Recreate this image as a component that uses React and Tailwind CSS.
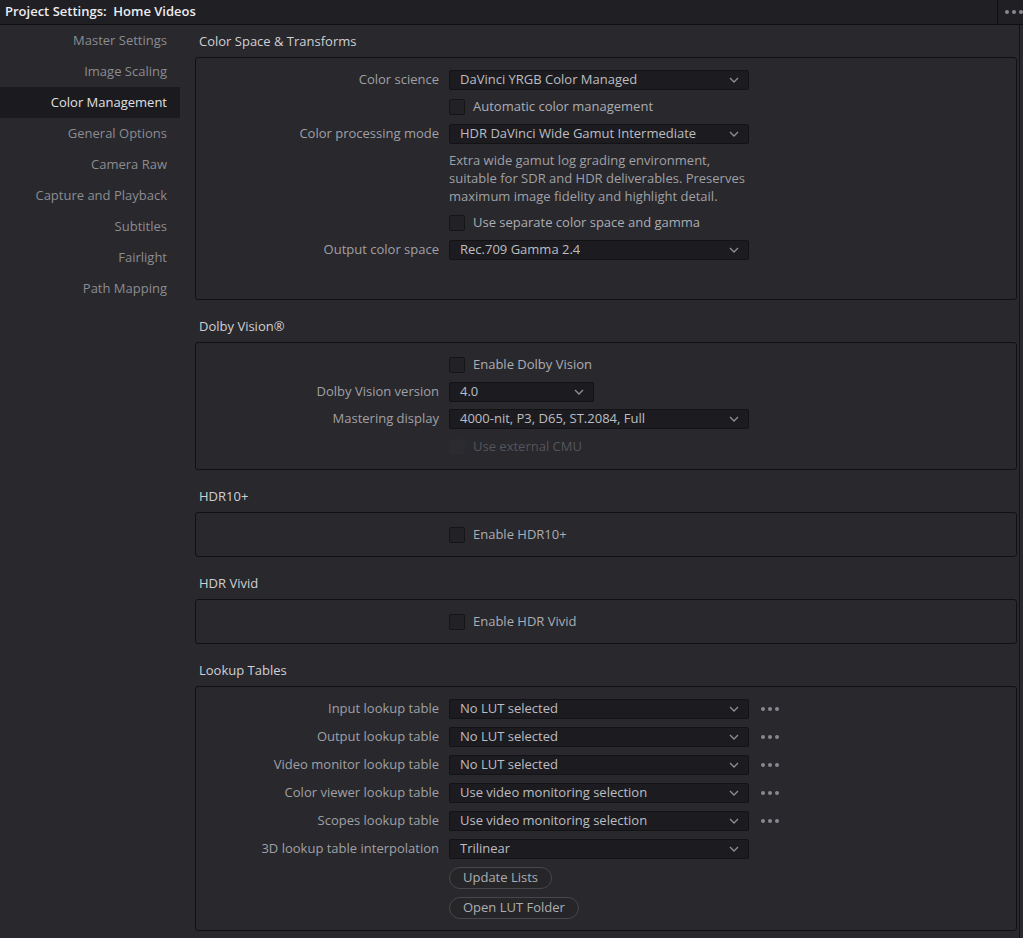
import React from 'react';

const navItems = [
  'Master Settings',
  'Image Scaling',
  'Color Management',
  'General Options',
  'Camera Raw',
  'Capture and Playback',
  'Subtitles',
  'Fairlight',
  'Path Mapping',
];

function Chevron() {
  return (
    <svg width="10" height="6" viewBox="0 0 10 6" className="shrink-0">
      <path d="M1 1 L5 5 L9 1" fill="none" stroke="#8e8e94" strokeWidth="1.3" />
    </svg>
  );
}

function Dots({ className = '' }) {
  return (
    <div className={'flex items-center gap-[3px] ' + className}>
      <span className="h-[4px] w-[4px] rounded-full bg-[#88888e]" />
      <span className="h-[4px] w-[4px] rounded-full bg-[#88888e]" />
      <span className="h-[4px] w-[4px] rounded-full bg-[#88888e]" />
    </div>
  );
}

function Select({ value, width = 'w-[300px]' }) {
  return (
    <div className={width + ' flex h-[20px] items-center justify-between rounded-[2px] border border-[#131316] bg-[#1c1c20] pl-[10px] pr-[9px] text-[#bcbcc1]'}>
      <span className="truncate">{value}</span>
      <Chevron />
    </div>
  );
}

function Checkbox({ label, disabled }) {
  return (
    <div className="flex items-center gap-[8px]">
      <span className={'h-[16px] w-[16px] rounded-[2px] border ' + (disabled ? 'border-[#2a2a2f] bg-[#2b2b30]' : 'border-[#151518] bg-[#222226]')} />
      <span className={disabled ? 'text-[#55555a]' : 'text-[#adadb2]'}>{label}</span>
    </div>
  );
}

function Row({ label, children, h = 'h-[27px]' }) {
  return (
    <div className={'flex items-center ' + h}>
      <div className="w-[253px] shrink-0 pr-[10px] text-right text-[#a0a0a5]">{label}</div>
      <div className="flex items-center">{children}</div>
    </div>
  );
}

function Section({ title, children, className = '' }) {
  return (
    <div className="mb-[10px]">
      <div className="flex h-[32px] items-center pl-[4px] pt-[2px] text-[#d0d0d4]">{title}</div>
      <div className={'rounded-[3px] border border-[#111113] ' + className}>{children}</div>
    </div>
  );
}

export default function App() {
  return (
    <div
      className="flex h-[938px] w-[1023px] flex-col overflow-hidden bg-[#28282d] text-[13px]"
      style={{ fontFamily: '"Open Sans", "Noto Sans", sans-serif' }}
    >
      <div className="flex h-[25px] shrink-0 items-center border-b border-[#0f0f11] bg-[#1f1f24]">
        <div className="flex-1 whitespace-pre pl-[5px] font-semibold text-[#ececef]">Project Settings:  Home Videos</div>
        <div className="flex h-full w-[26px] items-center border-l border-[#0f0f11] pl-[7px]">
          <Dots />
        </div>
      </div>

      <div className="flex flex-1">
        <div className="w-[180px] shrink-0">
          {navItems.map((item) => (
            <div
              key={item}
              className={
                'flex h-[31px] items-center justify-end pr-[13px] ' +
                (item === 'Color Management' ? 'bg-[#1b1b1f] text-[#e0e0e3]' : 'text-[#8c8c91]')
              }
            >
              {item}
            </div>
          ))}
        </div>

        <div className="flex-1 pl-[15px] pr-[2px]">
          <Section title="Color Space & Transforms" className="pt-[8px] pb-[36px]">
            <Row label="Color science">
              <Select value="DaVinci YRGB Color Managed" />
            </Row>
            <Row>
              <Checkbox label="Automatic color management" />
            </Row>
            <Row label="Color processing mode">
              <Select value="HDR DaVinci Wide Gamut Intermediate" />
            </Row>
            <div className="flex py-[4px] leading-[18px]">
              <div className="w-[253px] shrink-0" />
              <div className="w-[300px] text-[#a0a0a5]">
                Extra wide gamut log grading environment, suitable for SDR and HDR deliverables. Preserves maximum image fidelity and highlight detail.
              </div>
            </div>
            <Row>
              <Checkbox label="Use separate color space and gamma" />
            </Row>
            <Row label="Output color space">
              <Select value="Rec.709 Gamma 2.4" />
            </Row>
          </Section>

          <Section title="Dolby Vision®" className="pt-[8px] pb-[9px]">
            <Row>
              <Checkbox label="Enable Dolby Vision" />
            </Row>
            <Row label="Dolby Vision version">
              <Select value="4.0" width="w-[145px]" />
            </Row>
            <Row label="Mastering display" h="h-[28px]">
              <Select value="4000-nit, P3, D65, ST.2084, Full" />
            </Row>
            <Row>
              <Checkbox label="Use external CMU" disabled />
            </Row>
          </Section>

          <Section title="HDR10+" className="py-[8px]">
            <Row>
              <Checkbox label="Enable HDR10+" />
            </Row>
          </Section>

          <Section title="HDR Vivid" className="py-[8px]">
            <Row>
              <Checkbox label="Enable HDR Vivid" />
            </Row>
          </Section>

          <Section title="Lookup Tables" className="pt-[8px] pb-[7px]">
            {[
              ['Input lookup table', 'No LUT selected', true],
              ['Output lookup table', 'No LUT selected', true],
              ['Video monitor lookup table', 'No LUT selected', true],
              ['Color viewer lookup table', 'Use video monitoring selection', true],
              ['Scopes lookup table', 'Use video monitoring selection', true],
              ['3D lookup table interpolation', 'Trilinear', false],
            ].map(([label, value, dots]) => (
              <Row key={label} label={label} h="h-[28px]">
                <Select value={value} />
                {dots && <Dots className="ml-[12px]" />}
              </Row>
            ))}
            <Row h="h-[30px]">
              <button className="flex h-[22px] items-center rounded-full border border-[#46464c] bg-[#262629] px-[13px] text-[#adadb2]">
                Update Lists
              </button>
            </Row>
            <Row h="h-[30px]">
              <button className="flex h-[22px] items-center rounded-full border border-[#46464c] bg-[#262629] px-[13px] text-[#adadb2]">
                Open LUT Folder
              </button>
            </Row>
          </Section>
        </div>

        <div className="w-[1px] shrink-0 bg-[#141416]" />
        <div className="w-[3px] shrink-0" />
      </div>
    </div>
  );
}
